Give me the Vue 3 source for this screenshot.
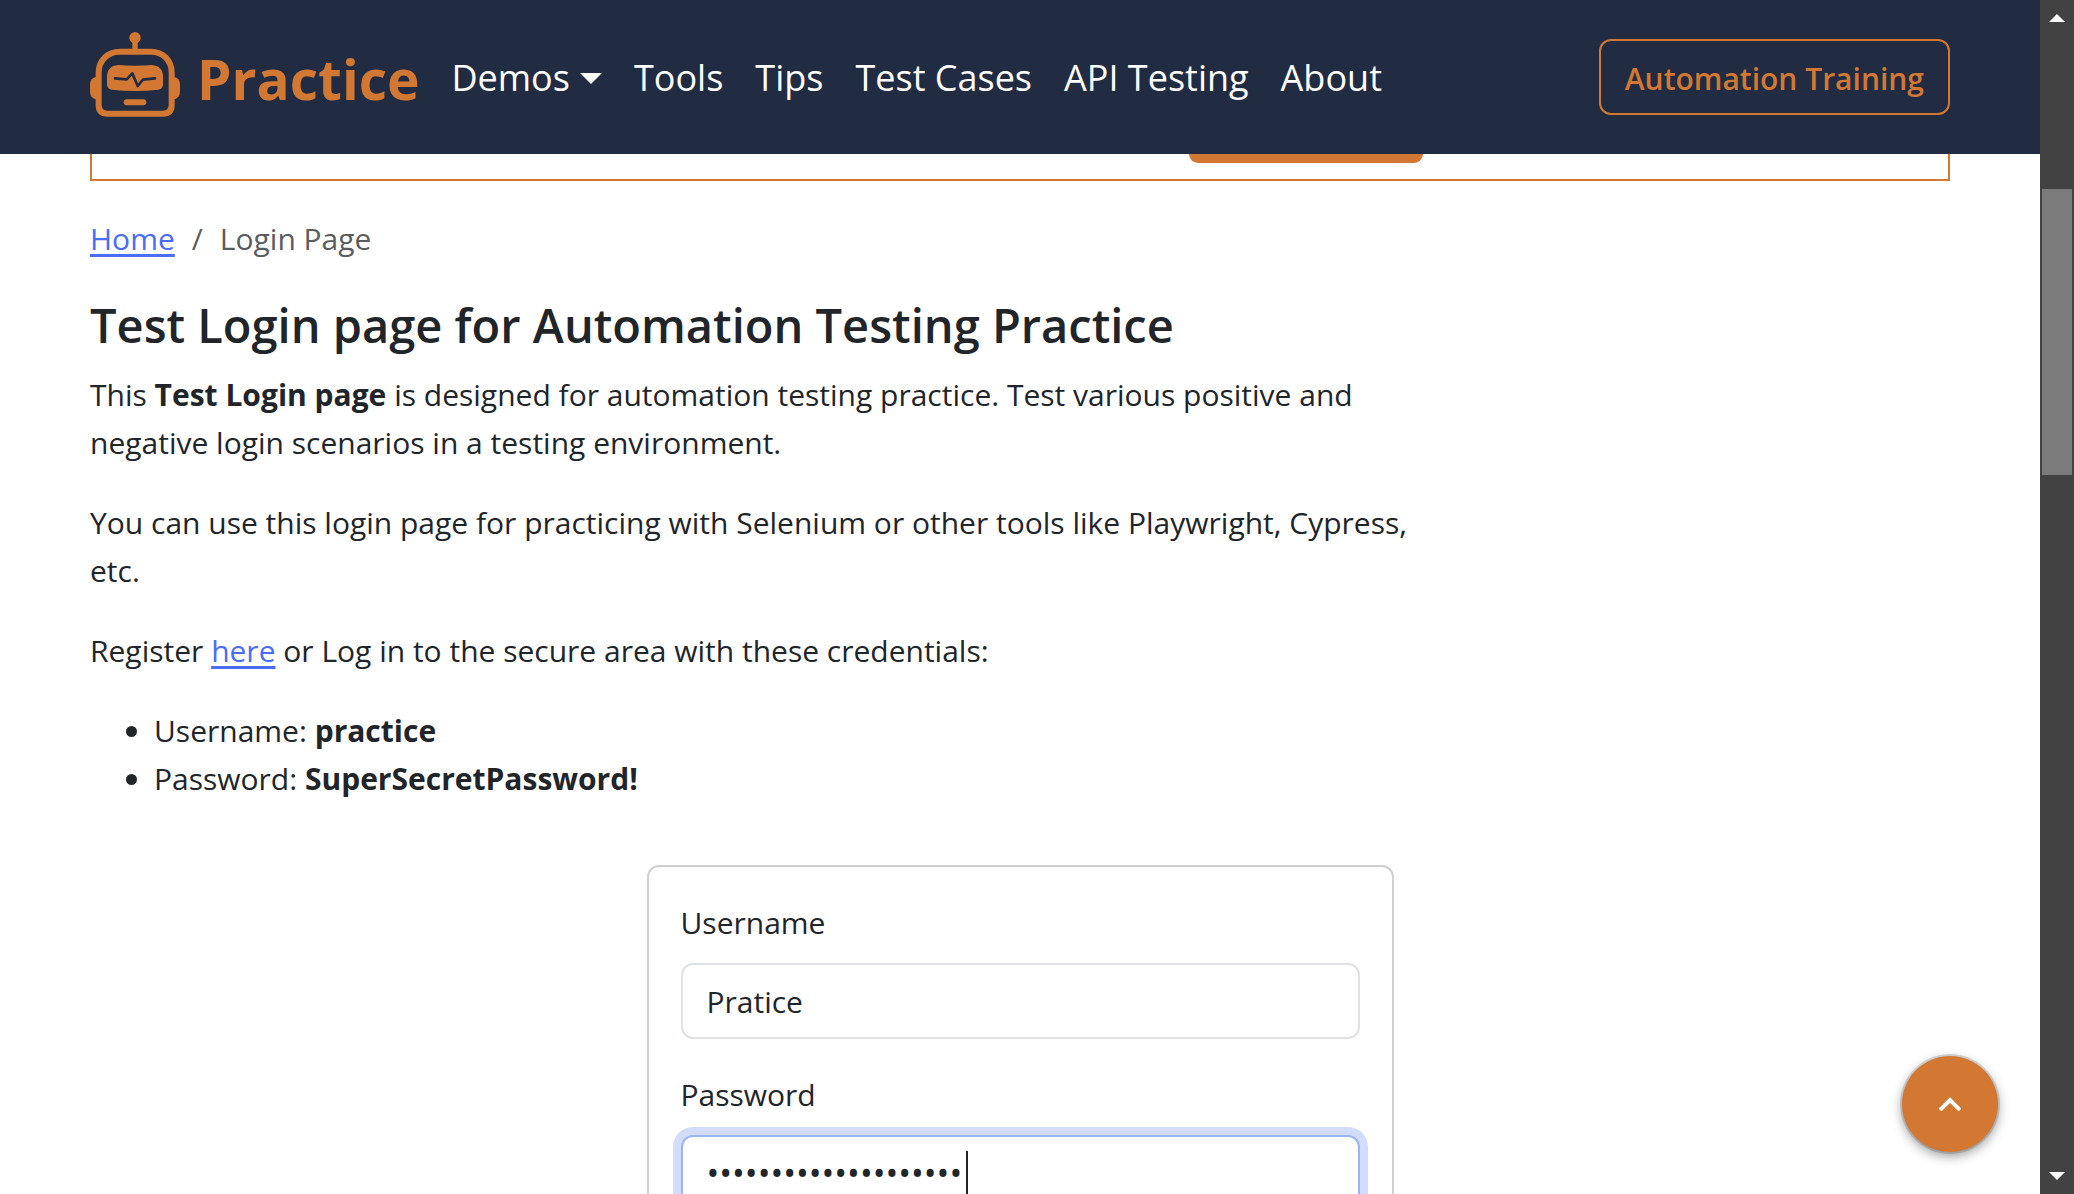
<script setup>
import { ref } from 'vue'

const links = ['Tools', 'Tips', 'Test Cases', 'API Testing', 'About']
const username = ref('Pratice')
const password = ref('SuperSecretPassword!')
</script>

<template>
  <div class="window">
    <div class="page">
      <header class="navbar">
        <a class="brand" href="#">
          <svg class="robot" viewBox="30 36 270 255" aria-hidden="true">
            <circle cx="165" cy="53" r="17" />
            <path d="M157 62h16v30h-16z" />
            <path d="M52 170Q30 173 30 192V215Q30 235 52 239ZM278 170Q300 173 300 192V215Q300 235 278 239Z" />
            <path class="shell" d="M119 95H213C249 95 275 122 275 158V255Q275 281 249 281H82Q56 281 56 255V158C56 122 83 95 119 95Z" />
            <path d="M115 135Q165 139 215 135Q249 138 249 170V193Q249 207 235 209Q165 217 95 209Q81 207 81 193V170Q81 138 115 135Z" />
            <path class="pulse" d="M105 175L140 178L157 160L173 198L189 179L225 175" />
            <rect x="131" y="238" width="68" height="18" rx="9" />
          </svg>
          <span>Practice</span>
        </a>
        <nav class="links">
          <button class="dropdown" type="button">Demos<i class="triangle"></i></button>
          <a v-for="link in links" :key="link" href="#">{{ link }}</a>
        </nav>
        <a class="training" href="#">Automation Training</a>
      </header>

      <main class="content">
        <div class="banner"><div class="banner-action"></div></div>

        <nav class="breadcrumb" aria-label="breadcrumb">
          <a href="#">Home</a><span>/</span><span>Login Page</span>
        </nav>

        <section class="intro">
          <h1>Test Login page for Automation Testing Practice</h1>
          <p>This <b>Test Login page</b> is designed for automation testing practice. Test various positive and negative login scenarios in a testing environment.</p>
          <p>You can use this login page for practicing with Selenium or other tools like Playwright, Cypress, etc.</p>
          <p>Register <a href="#">here</a> or Log in to the secure area with these credentials:</p>
          <ul>
            <li>Username: <b>practice</b></li>
            <li>Password: <b>SuperSecretPassword!</b></li>
          </ul>
        </section>

        <form class="card" @submit.prevent>
          <label for="username">Username</label>
          <input id="username" v-model="username" type="text" />
          <label for="password">Password</label>
          <div class="field">
            <input id="password" v-model="password" class="focused" type="password" />
            <i class="text-cursor"></i>
          </div>
        </form>
      </main>

      <button class="to-top" type="button" aria-label="Back to top">
        <svg viewBox="0 0 22 14" width="22" height="14"><path d="M1 13L11 3L21 13" /></svg>
      </button>
    </div>

    <div class="scrollbar" aria-hidden="true">
      <i class="arrow up"></i>
      <div class="track"><div class="thumb"></div></div>
      <i class="arrow down"></i>
    </div>
  </div>
</template>

<style>
body {
  margin: 0;
  overflow: hidden;
}
</style>

<style scoped>
* {
  box-sizing: border-box;
}

.window {
  display: flex;
  height: 100vh;
  overflow: hidden;
  background: #fff;
  color: #212529;
  font: 400 30px/48px "Open Sans", "Noto Sans", sans-serif;
}

.page {
  position: relative;
  flex: 1;
  min-width: 0;
  overflow: hidden;
}

.navbar {
  display: flex;
  align-items: center;
  height: 154px;
  padding: 0 90px;
  background: #212b42;
}

.brand {
  display: flex;
  align-items: center;
  gap: 17px;
  color: #d37833;
  font-size: 55px;
  font-weight: 700;
  line-height: 80px;
  text-decoration: none;
}

.brand span {
  padding-top: 4px;
}

.robot {
  width: 90px;
  height: 85px;
  margin-bottom: 6px;
  fill: #d37833;
}

.shell {
  fill: none;
  stroke: #d37833;
  stroke-width: 18;
}

.pulse {
  fill: none;
  stroke: #212b42;
  stroke-width: 8;
  stroke-linecap: round;
  stroke-linejoin: round;
}

.links {
  display: flex;
  align-items: center;
  gap: 32px;
  margin-left: 32px;
  padding-top: 2px;
  font-size: 36px;
}

.links a,
.dropdown {
  color: #fff;
  text-decoration: none;
  white-space: nowrap;
}

.dropdown {
  display: flex;
  align-items: center;
  gap: 10px;
  padding: 0;
  border: 0;
  background: none;
  font: inherit;
}

.triangle {
  border: 11px solid transparent;
  border-top-color: #fff;
  border-bottom: 0;
}

.training {
  margin-left: auto;
  padding: 14px 24px 10px;
  border: 2px solid #d37833;
  border-radius: 12px;
  color: #d37833;
  font-weight: 600;
  text-decoration: none;
}

.content {
  padding: 0 90px;
}

.banner {
  height: 27px;
  border: 2px solid #d37833;
  border-top: 0;
}

.banner-action {
  width: 234px;
  height: 9px;
  margin-left: 59.1%;
  border-radius: 0 0 9px 9px;
  background: #d37833;
}

.breadcrumb {
  display: flex;
  gap: 17px;
  margin: 34px 0 32px;
  color: #5a5d60;
}

.content a {
  color: #4a6cf7;
  text-decoration-thickness: 3px;
  text-underline-offset: 4px;
}

.intro {
  width: 73%;
}

h1 {
  margin: 0 0 16px;
  font-size: 47px;
  font-weight: 600;
  line-height: 60px;
}

p {
  margin: 0 0 32px;
}

ul {
  margin: 0;
  padding-left: 64px;
}

.card {
  width: 747px;
  max-width: 100%;
  margin: 62px auto 0;
  padding: 32px;
  border: 2px solid #d0d0d0;
  border-radius: 12px;
}

label {
  display: block;
  margin-bottom: 16px;
}

input {
  display: block;
  width: 100%;
  height: 76px;
  margin-bottom: 32px;
  padding: 12px 24px;
  border: 2px solid #dee2e6;
  border-radius: 12px;
  outline: 0;
  background: #fff;
  color: #212529;
  font: inherit;
}

.focused {
  border-color: #9ab5f9;
  box-shadow: 0 0 0 8px #d2dcfc;
  font-size: 34px;
}

.field {
  position: relative;
}

.text-cursor {
  position: absolute;
  top: 16px;
  left: 285px;
  width: 2px;
  height: 44px;
  background: #212529;
}

.to-top {
  position: absolute;
  right: 42px;
  bottom: 42px;
  display: flex;
  align-items: center;
  justify-content: center;
  width: 96px;
  height: 96px;
  padding: 0;
  border: 0;
  border-radius: 50%;
  background: #d37833;
  box-shadow: 0 0 0 2px #0002, 0 4px 12px #0006;
}

.to-top path {
  fill: none;
  stroke: #fff;
  stroke-width: 4;
}

.scrollbar {
  display: flex;
  flex-direction: column;
  align-items: center;
  width: 34px;
  padding: 14px 0;
  background: #424242;
}

.track {
  flex: 1;
  width: 30px;
  padding-top: 167px;
}

.thumb {
  height: 286px;
  background: #7b7b7b;
}

.arrow {
  border: 8px solid transparent;
}

.up {
  border-top: 0;
  border-bottom-color: #fff;
}

.down {
  border-bottom: 0;
  border-top-color: #fff;
}
</style>
